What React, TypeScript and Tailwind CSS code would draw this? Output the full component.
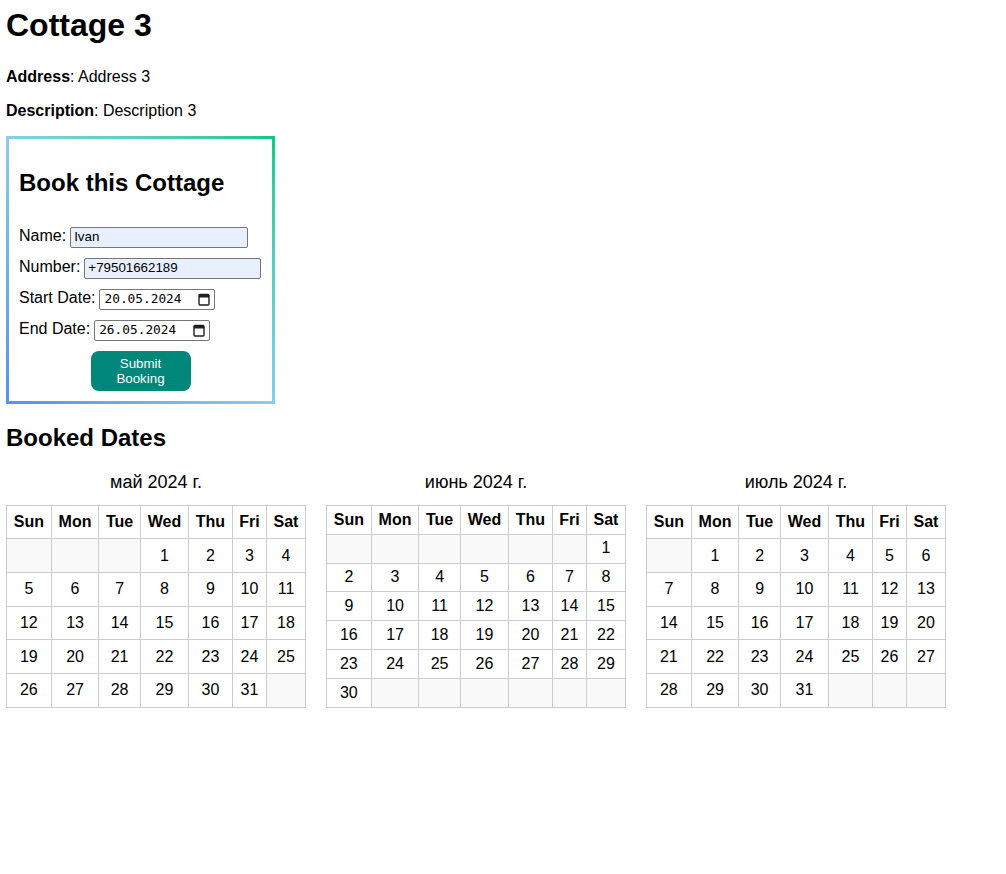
import React from 'react';

type Cell = number | null;

const DAYS = ['Sun', 'Mon', 'Tue', 'Wed', 'Thu', 'Fri', 'Sat'];

function buildWeeks(firstDay: number, length: number): Cell[][] {
  const cells: Cell[] = [];
  for (let i = 0; i < firstDay; i++) cells.push(null);
  for (let d = 1; d <= length; d++) cells.push(d);
  while (cells.length % 7 !== 0) cells.push(null);
  const weeks: Cell[][] = [];
  for (let i = 0; i < cells.length; i += 7) weeks.push(cells.slice(i, i + 7));
  return weeks;
}

const MONTHS = [
  { title: 'май 2024 г.', first: 3, length: 31 },
  { title: 'июнь 2024 г.', first: 6, length: 30 },
  { title: 'июль 2024 г.', first: 1, length: 31 },
];

function CalendarIcon() {
  return (
    <svg width="12" height="13" viewBox="0 0 12 13" className="shrink-0">
      <rect x="1" y="1.5" width="10" height="10.5" rx="1" fill="none" stroke="#1f1f1f" strokeWidth="1.4" />
      <rect x="1" y="1.5" width="10" height="3" fill="#1f1f1f" />
    </svg>
  );
}

function TextField({ value, width }: { value: string; width: string }) {
  return (
    <div
      className={`${width} h-[21px] flex items-center border border-[#767676] rounded-[2px] bg-[#e8f0fe] px-[3px] text-[13.33px] text-black`}
    >
      {value}
    </div>
  );
}

function DateField({ value }: { value: string }) {
  return (
    <div className="w-[116px] h-[21px] flex items-center justify-between border border-[#767676] rounded-[2px] bg-white pl-[4px] pr-[4px] text-[12.8px] text-black font-['DejaVu_Sans_Mono',monospace]">
      <span>{value}</span>
      <CalendarIcon />
    </div>
  );
}

function Month({ title, first, length }: { title: string; first: number; length: number }) {
  const weeks = buildWeeks(first, length);
  return (
    <div className="w-[300px]">
      <div className="text-center text-[18px] leading-[21px] mb-[12px]">{title}</div>
      <table className="w-[300px] h-[203px] border-collapse">
        <tbody>
          <tr>
            {DAYS.map((d) => (
              <th key={d} className="border border-[#cccccc] px-[5px] py-[4px] font-bold text-center">
                {d}
              </th>
            ))}
          </tr>
          {weeks.map((week, wi) => (
            <tr key={wi}>
              {week.map((day, di) => (
                <td
                  key={di}
                  className={`border border-[#cccccc] px-[5px] py-[4px] text-center ${day === null ? 'bg-[#f9f9f9]' : ''}`}
                >
                  {day}
                </td>
              ))}
            </tr>
          ))}
        </tbody>
      </table>
    </div>
  );
}

export default function App() {
  return (
    <div className="min-h-[874px] bg-white px-[6px] pt-[7px] text-black text-[16px] leading-[18.4px] font-['Liberation_Sans',Arial,sans-serif]">
      <h1 className="text-[32px] leading-[37px] font-bold mb-[24px]">Cottage 3</h1>
      <p className="mb-[16px]">
        <strong>Address</strong>: Address 3
      </p>
      <p className="mb-[15px]">
        <strong>Description</strong>: Description 3
      </p>

      <div className="w-[269px] p-[3px] bg-gradient-to-tr from-[#4f94f0] via-[#87ceeb] to-[#00c98b]">
        <div className="bg-white p-[10px]">
          <h2 className="text-[24px] leading-[28px] font-bold mt-[20px] mb-[30px]">Book this Cottage</h2>
          <div className="flex items-center gap-[4px] h-[21px] mb-[10px]">
            <span className="mb-[3px]">Name:</span>
            <TextField value="Ivan" width="w-[178px]" />
          </div>
          <div className="flex items-center gap-[4px] h-[21px] mb-[10px]">
            <span className="mb-[3px]">Number:</span>
            <TextField value="+79501662189" width="w-[177px]" />
          </div>
          <div className="flex items-center gap-[4px] h-[21px] mb-[10px]">
            <span className="mb-[3px]">Start Date:</span>
            <DateField value="20.05.2024" />
          </div>
          <div className="flex items-center gap-[4px] h-[21px] mb-[10px]">
            <span className="mb-[3px]">End Date:</span>
            <DateField value="26.05.2024" />
          </div>
          <div className="flex justify-center">
            <button className="w-[100px] h-[40px] rounded-[8px] bg-[#00877a] text-white text-[13.33px] leading-[15px] font-normal">
              Submit
              <br />
              Booking
            </button>
          </div>
        </div>
      </div>

      <h2 className="text-[24px] leading-[28px] font-bold mt-[20px] mb-[20px]">Booked Dates</h2>
      <div className="flex gap-[20px]">
        {MONTHS.map((m) => (
          <Month key={m.title} title={m.title} first={m.first} length={m.length} />
        ))}
      </div>
    </div>
  );
}
